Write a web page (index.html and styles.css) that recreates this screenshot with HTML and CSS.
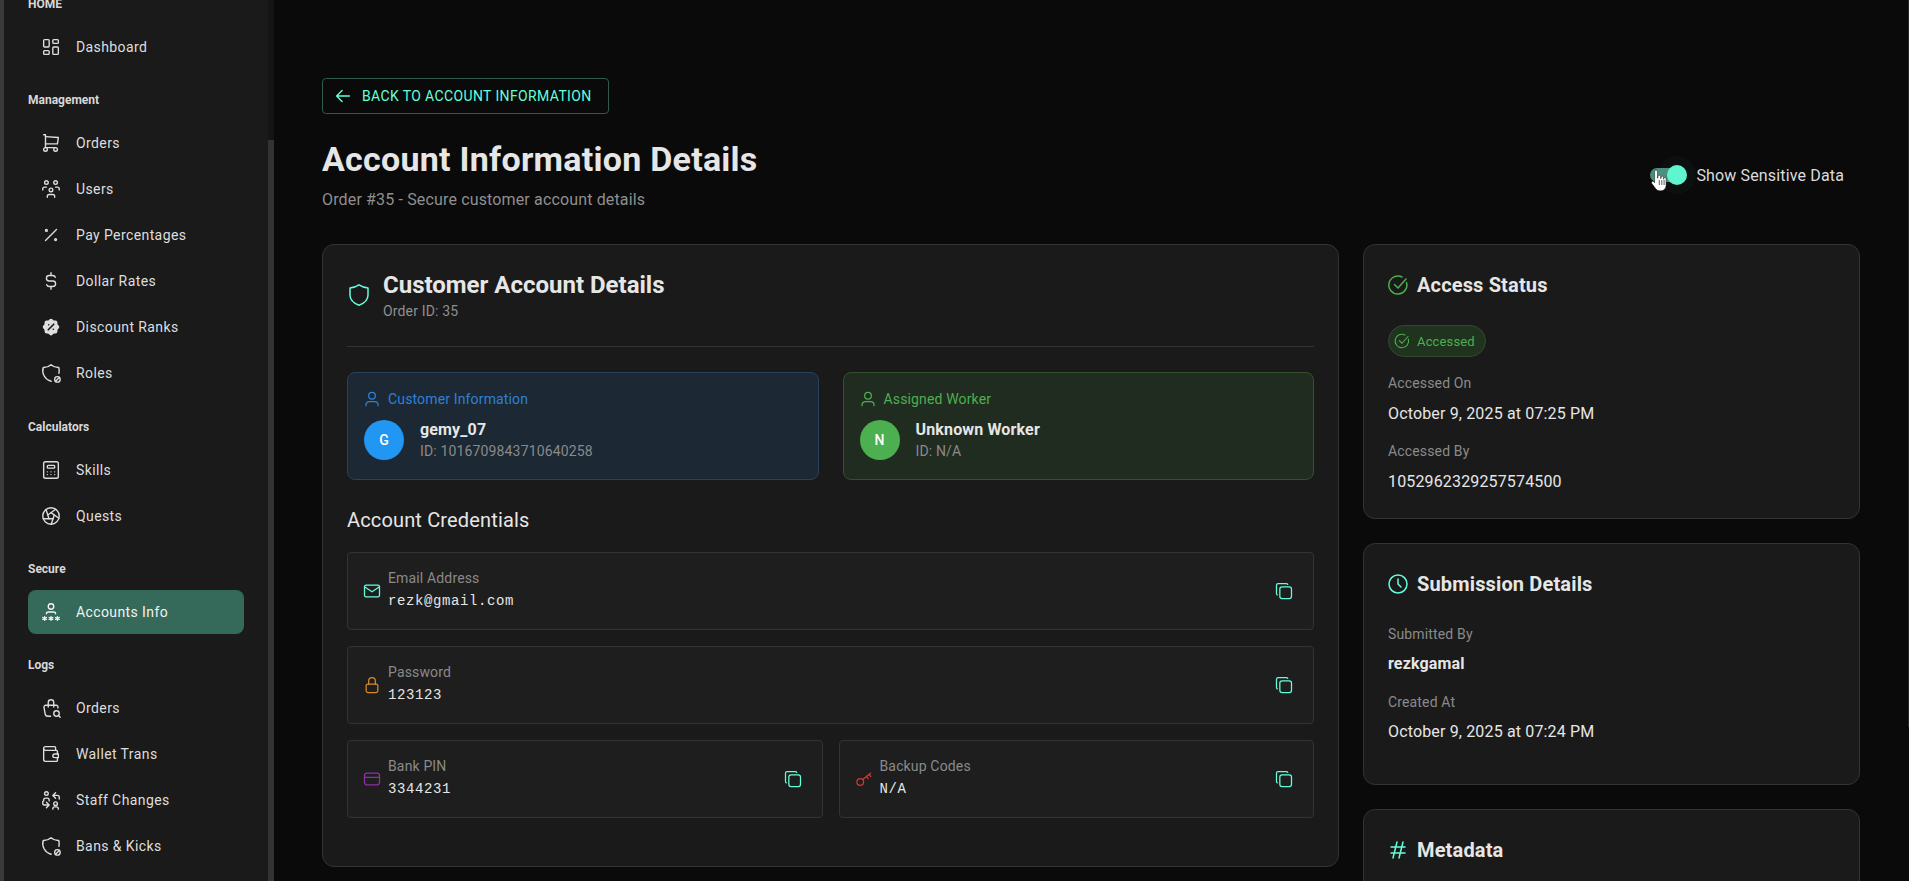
FILE: index.html
```html
<!DOCTYPE html>
<html lang="en">
<head>
<meta charset="utf-8">
<title>Account Information Details</title>
<link rel="stylesheet" href="styles.css">
</head>
<body>
<svg class="defs" width="0" height="0" aria-hidden="true">
  <defs>
    <symbol id="i-dashboard" viewBox="0 0 24 24"><path d="M5 4h4a1 1 0 0 1 1 1v6a1 1 0 0 1 -1 1h-4a1 1 0 0 1 -1 -1v-6a1 1 0 0 1 1 -1"/><path d="M5 16h4a1 1 0 0 1 1 1v2a1 1 0 0 1 -1 1h-4a1 1 0 0 1 -1 -1v-2a1 1 0 0 1 1 -1"/><path d="M15 12h4a1 1 0 0 1 1 1v6a1 1 0 0 1 -1 1h-4a1 1 0 0 1 -1 -1v-6a1 1 0 0 1 1 -1"/><path d="M15 4h4a1 1 0 0 1 1 1v2a1 1 0 0 1 -1 1h-4a1 1 0 0 1 -1 -1v-2a1 1 0 0 1 1 -1"/></symbol>
    <symbol id="i-cart" viewBox="0 0 24 24"><path d="M4 19a2 2 0 1 0 4 0a2 2 0 1 0 -4 0"/><path d="M15 19a2 2 0 1 0 4 0a2 2 0 1 0 -4 0"/><path d="M17 17h-11v-14h-2"/><path d="M6 5l14 1l-1 7h-13"/></symbol>
    <symbol id="i-users" viewBox="0 0 24 24"><path d="M10 13a2 2 0 1 0 4 0a2 2 0 0 0 -4 0"/><path d="M8 21v-1a2 2 0 0 1 2 -2h4a2 2 0 0 1 2 2v1"/><path d="M15 5a2 2 0 1 0 4 0a2 2 0 0 0 -4 0"/><path d="M17 10h2a2 2 0 0 1 2 2v1"/><path d="M5 5a2 2 0 1 0 4 0a2 2 0 0 0 -4 0"/><path d="M3 13v-1a2 2 0 0 1 2 -2h2"/></symbol>
    <symbol id="i-percent" viewBox="0 0 24 24"><path d="M16 17a1 1 0 1 0 2 0a1 1 0 1 0 -2 0"/><path d="M6 7a1 1 0 1 0 2 0a1 1 0 1 0 -2 0"/><path d="M6 18l12 -12"/></symbol>
    <symbol id="i-dollar" viewBox="0 0 24 24"><path d="M16.7 8a3 3 0 0 0 -2.7 -2h-4a3 3 0 0 0 0 6h4a3 3 0 0 1 0 6h-4a3 3 0 0 1 -2.7 -2"/><path d="M12 3v3m0 12v3"/></symbol>
    <symbol id="i-discount" viewBox="0 0 24 24"><path class="solid" d="M5 7.2a2.2 2.2 0 0 1 2.2 -2.2h1a2.2 2.2 0 0 0 1.55 -.64l.7 -.7a2.2 2.2 0 0 1 3.12 0l.7 .7c.412 .41 .97 .64 1.55 .64h1a2.2 2.2 0 0 1 2.2 2.2v1c0 .58 .23 1.138 .64 1.55l.7 .7a2.2 2.2 0 0 1 0 3.12l-.7 .7a2.2 2.2 0 0 0 -.64 1.55v1a2.2 2.2 0 0 1 -2.2 2.2h-1a2.2 2.2 0 0 0 -1.55 .64l-.7 .7a2.2 2.2 0 0 1 -3.12 0l-.7 -.7a2.2 2.2 0 0 0 -1.55 -.64h-1a2.2 2.2 0 0 1 -2.2 -2.2v-1a2.2 2.2 0 0 0 -.64 -1.55l-.7 -.7a2.2 2.2 0 0 1 0 -3.12l.7 -.7a2.2 2.2 0 0 0 .64 -1.55v-1"/><path class="cut" d="M9 15l6 -6M9.5 9.5h.01M14.5 14.5h.01"/></symbol>
    <symbol id="i-shield-x" viewBox="0 0 24 24"><path d="M12.277 20.925c-.092 .026 -.184 .051 -.277 .075a12 12 0 0 1 -8.5 -15a12 12 0 0 0 8.5 -3a12 12 0 0 0 8.5 3a12 12 0 0 1 .145 6.232"/><path d="M16 19a3 3 0 1 0 6 0a3 3 0 1 0 -6 0"/><path d="M17 21l4 -4"/></symbol>
    <symbol id="i-calc" viewBox="0 0 24 24"><path d="M4 5a2 2 0 0 1 2 -2h12a2 2 0 0 1 2 2v14a2 2 0 0 1 -2 2h-12a2 2 0 0 1 -2 -2z"/><path d="M8 8a1 1 0 0 1 1 -1h6a1 1 0 0 1 1 1v1a1 1 0 0 1 -1 1h-6a1 1 0 0 1 -1 -1z"/><path d="M8 14v.01M12 14v.01M16 14v.01M8 17v.01M12 17v.01M16 17v.01"/></symbol>
    <symbol id="i-aperture" viewBox="0 0 24 24"><path d="M3 12a9 9 0 1 0 18 0a9 9 0 1 0 -18 0"/><path d="M3.6 15h10.55"/><path d="M6.551 4.938l3.26 10.034"/><path d="M17.032 4.636l-8.535 6.201"/><path d="M20.559 14.51l-8.535 -6.201"/><path d="M12.257 20.916l3.261 -10.034"/></symbol>
    <symbol id="i-password-user" viewBox="0 0 24 24"><path d="M12 17v4M10 20l4 -2M10 18l4 2M5 17v4M3 20l4 -2M3 18l4 2M19 17v4M17 20l4 -2M17 18l4 2"/><path d="M9 6a3 3 0 1 0 6 0a3 3 0 0 0 -6 0"/><path d="M7 14a2 2 0 0 1 2 -2h6a2 2 0 0 1 2 2"/></symbol>
    <symbol id="i-bag-search" viewBox="0 0 24 24"><path d="M11.5 21h-2.926a3 3 0 0 1 -2.965 -2.544l-1.255 -7.152a2 2 0 0 1 1.977 -2.304h11.339a2 2 0 0 1 1.977 2.304l-.117 .664"/><path d="M9 11v-5a3 3 0 0 1 6 0v5"/><path d="M15 18a3 3 0 1 0 6 0a3 3 0 1 0 -6 0"/><path d="M20.2 20.2l1.8 1.8"/></symbol>
    <symbol id="i-wallet" viewBox="0 0 24 24"><path d="M17 8v-3a1 1 0 0 0 -1 -1h-10a2 2 0 0 0 0 4h12a1 1 0 0 1 1 1v3m0 4v3a1 1 0 0 1 -1 1h-12a2 2 0 0 1 -2 -2v-12"/><path d="M20 12v4h-4a2 2 0 0 1 0 -4h4"/></symbol>
    <symbol id="i-staff" viewBox="0 0 24 24"><path d="M5 5a2 2 0 1 0 4 0a2 2 0 0 0 -4 0"/><path d="M4 13v-1a2 2 0 0 1 2 -2h2a2 2 0 0 1 2 2v1"/><path d="M15 16a2 2 0 1 0 4 0a2 2 0 0 0 -4 0"/><path d="M14 22v-.5a2 2 0 0 1 2 -2h2a2 2 0 0 1 2 2v.5"/><path d="M21 11v-2a2 2 0 0 0 -2 -2h-5l3 -3M14 7l3 3"/><path d="M3 13.500v2a2 2 0 0 0 2 2h5l-3 -3M10 17.500l-3 3"/></symbol>
    <symbol id="i-back" viewBox="0 0 24 24"><path d="M5 12h14M5 12l6 6M5 12l6 -6"/></symbol>
    <symbol id="i-shield" viewBox="0 0 24 24"><path d="M12 1.800c2.800 1.800 5.800 2.900 9 3.200v7c0 5 -3.800 8.300 -9 10.200c-5.200 -1.900 -9 -5.200 -9 -10.200v-7c3.200 -.3 6.200 -1.400 9 -3.200z"/></symbol>
    <symbol id="i-user" viewBox="0 0 24 24"><path d="M8 8a4 4 0 1 0 8 0a4 4 0 0 0 -8 0"/><path d="M4.800 20v-1a4 4 0 0 1 4 -4h6.400a4 4 0 0 1 4 4v1"/></symbol>
    <symbol id="i-mail" viewBox="0 0 24 24"><path d="M3 7a2 2 0 0 1 2 -2h14a2 2 0 0 1 2 2v10a2 2 0 0 1 -2 2h-14a2 2 0 0 1 -2 -2z"/><path d="M3 7l9 6l9 -6"/></symbol>
    <symbol id="i-lock" viewBox="0 0 24 24"><path d="M5 13a2 2 0 0 1 2 -2h10a2 2 0 0 1 2 2v6a2 2 0 0 1 -2 2h-10a2 2 0 0 1 -2 -2z"/><path d="M8 11v-4a4 4 0 1 1 8 0v4"/></symbol>
    <symbol id="i-card" viewBox="0 0 24 24"><path d="M3 8a3 3 0 0 1 3 -3h12a3 3 0 0 1 3 3v8a3 3 0 0 1 -3 3h-12a3 3 0 0 1 -3 -3z"/><path d="M3 10h18"/></symbol>
    <symbol id="i-key" viewBox="0 0 24 24"><path d="M3.500 15.500a4 4 0 1 0 8 0a4 4 0 1 0 -8 0"/><path d="M10.500 12.500l9.500 -7.500"/><path d="M15 9l2 2.500M18 6.500l2 2.500"/></symbol>
    <symbol id="i-copy" viewBox="0 0 24 24"><path d="M7 9.667a2.667 2.667 0 0 1 2.667 -2.667h8.666a2.667 2.667 0 0 1 2.667 2.667v8.666a2.667 2.667 0 0 1 -2.667 2.667h-8.666a2.667 2.667 0 0 1 -2.667 -2.667z"/><path d="M4.012 16.737a2.005 2.005 0 0 1 -1.012 -1.737v-10c0 -1.100 .9 -2 2 -2h10c.75 0 1.158 .385 1.500 1"/></symbol>
    <symbol id="i-check-tail" viewBox="0 0 24 24"><path d="M20.500 9.500a9 9 0 1 1 -4.500 -5.500"/><path d="M8.500 11.500l3.500 3.500l8 -9"/></symbol>
    <symbol id="i-clock" viewBox="0 0 24 24"><path d="M3 12a9 9 0 1 0 18 0a9 9 0 0 0 -18 0"/><path d="M12 7v5l3 3"/></symbol>
    <symbol id="i-hash" viewBox="0 0 24 24"><path d="M5 9h14M5 15h14M11 4l-4 16M17 4l-4 16"/></symbol>
  </defs>
</svg>

<div class="app">
  <aside class="sidebar">
    <nav class="nav">
      <div class="nav-group">
        <div class="nav-title">HOME</div>
        <a class="nav-item"><svg class="icon nav-icon"><use href="#i-dashboard"/></svg><span>Dashboard</span></a>
      </div>
      <div class="nav-group">
        <div class="nav-title">Management</div>
        <a class="nav-item"><svg class="icon nav-icon"><use href="#i-cart"/></svg><span>Orders</span></a>
        <a class="nav-item"><svg class="icon nav-icon"><use href="#i-users"/></svg><span>Users</span></a>
        <a class="nav-item"><svg class="icon nav-icon"><use href="#i-percent"/></svg><span>Pay Percentages</span></a>
        <a class="nav-item"><svg class="icon nav-icon"><use href="#i-dollar"/></svg><span>Dollar Rates</span></a>
        <a class="nav-item"><svg class="icon nav-icon"><use href="#i-discount"/></svg><span>Discount Ranks</span></a>
        <a class="nav-item"><svg class="icon nav-icon"><use href="#i-shield-x"/></svg><span>Roles</span></a>
      </div>
      <div class="nav-group">
        <div class="nav-title">Calculators</div>
        <a class="nav-item"><svg class="icon nav-icon"><use href="#i-calc"/></svg><span>Skills</span></a>
        <a class="nav-item"><svg class="icon nav-icon"><use href="#i-aperture"/></svg><span>Quests</span></a>
      </div>
      <div class="nav-group">
        <div class="nav-title">Secure</div>
        <a class="nav-item is-active"><svg class="icon nav-icon"><use href="#i-password-user"/></svg><span>Accounts Info</span></a>
      </div>
      <div class="nav-group">
        <div class="nav-title">Logs</div>
        <a class="nav-item"><svg class="icon nav-icon"><use href="#i-bag-search"/></svg><span>Orders</span></a>
        <a class="nav-item"><svg class="icon nav-icon"><use href="#i-wallet"/></svg><span>Wallet Trans</span></a>
        <a class="nav-item"><svg class="icon nav-icon"><use href="#i-staff"/></svg><span>Staff Changes</span></a>
        <a class="nav-item"><svg class="icon nav-icon"><use href="#i-shield-x"/></svg><span>Bans &amp; Kicks</span></a>
      </div>
    </nav>
    <div class="side-scroll"><div class="side-thumb"></div></div>
  </aside>

  <main class="main">
    <a class="back-btn"><svg class="icon back-icon"><use href="#i-back"/></svg>BACK TO ACCOUNT INFORMATION</a>

    <header class="page-head">
      <div>
        <h1 class="page-title">Account Information Details</h1>
        <p class="page-sub">Order #35 - Secure customer account details</p>
      </div>
      <label class="toggle">
        <span class="switch"><span class="switch-track"></span><span class="switch-thumb"></span>
          <svg class="hand" viewBox="0 0 16 23"><path d="M5 1.200c.9 0 1.500.7 1.500 1.600v6.200l.5.100V7.500c0-.8.600-1.300 1.300-1.300s1.300.5 1.300 1.300v2l.5.100V8.400c0-.7.600-1.200 1.200-1.200s1.200.5 1.200 1.200v1.700l.4.100V9.500c0-.6.500-1.100 1.100-1.100s1.100.5 1.100 1.100v6.300c0 3.500-2 6-5.200 6H8.700c-2 0-3.200-.9-4.300-2.500L.9 14.600c-.5-.7-.4-1.500.2-2 .6-.4 1.400-.3 1.900.3l.6.800V2.800c0-.9.500-1.600 1.400-1.600z"/><path class="hand-line" d="M8.300 11v5M10.800 11v5M13.100 11v5"/></svg>
        </span>
        <span class="toggle-text">Show Sensitive Data</span>
      </label>
    </header>

    <div class="columns">
      <section class="card card-main">
        <div class="card-head">
          <svg class="icon head-icon teal"><use href="#i-shield"/></svg>
          <div>
            <h2 class="card-title">Customer Account Details</h2>
            <p class="card-sub">Order ID: 35</p>
          </div>
        </div>
        <hr class="divider">
        <div class="people">
          <div class="person person-blue">
            <div class="person-label"><svg class="icon small-icon"><use href="#i-user"/></svg><span>Customer Information</span></div>
            <div class="person-row">
              <div class="avatar">G</div>
              <div>
                <div class="person-name">gemy_07</div>
                <div class="person-id">ID: 1016709843710640258</div>
              </div>
            </div>
          </div>
          <div class="person person-green">
            <div class="person-label"><svg class="icon small-icon"><use href="#i-user"/></svg><span>Assigned Worker</span></div>
            <div class="person-row">
              <div class="avatar">N</div>
              <div>
                <div class="person-name">Unknown Worker</div>
                <div class="person-id">ID: N/A</div>
              </div>
            </div>
          </div>
        </div>

        <h3 class="cred-title">Account Credentials</h3>
        <div class="creds">
          <div class="cred cred-wide">
            <svg class="icon small-icon teal"><use href="#i-mail"/></svg>
            <div class="cred-body"><div class="cred-label">Email Address</div><div class="cred-value">rezk@gmail.com</div></div>
            <span class="copy-btn"><svg class="icon copy-icon"><use href="#i-copy"/></svg></span>
          </div>
          <div class="cred cred-wide">
            <svg class="icon small-icon orange"><use href="#i-lock"/></svg>
            <div class="cred-body"><div class="cred-label">Password</div><div class="cred-value">123123</div></div>
            <span class="copy-btn"><svg class="icon copy-icon"><use href="#i-copy"/></svg></span>
          </div>
          <div class="cred">
            <svg class="icon small-icon purple"><use href="#i-card"/></svg>
            <div class="cred-body"><div class="cred-label">Bank PIN</div><div class="cred-value">3344231</div></div>
            <span class="copy-btn"><svg class="icon copy-icon"><use href="#i-copy"/></svg></span>
          </div>
          <div class="cred">
            <svg class="icon small-icon red"><use href="#i-key"/></svg>
            <div class="cred-body"><div class="cred-label">Backup Codes</div><div class="cred-value">N/A</div></div>
            <span class="copy-btn"><svg class="icon copy-icon"><use href="#i-copy"/></svg></span>
          </div>
        </div>
      </section>

      <div class="side-cards">
        <section class="card">
          <h2 class="side-title"><svg class="icon title-icon green"><use href="#i-check-tail"/></svg>Access Status</h2>
          <div class="chip"><svg class="icon chip-icon"><use href="#i-check-tail"/></svg>Accessed</div>
          <dl class="facts facts-roomy">
            <dt>Accessed On</dt><dd>October 9, 2025 at 07:25 PM</dd>
            <dt>Accessed By</dt><dd class="last">1052962329257574500</dd>
          </dl>
        </section>
        <section class="card">
          <h2 class="side-title"><svg class="icon title-icon teal"><use href="#i-clock"/></svg>Submission Details</h2>
          <dl class="facts facts-open">
            <dt>Submitted By</dt><dd class="strong">rezkgamal</dd>
            <dt>Created At</dt><dd>October 9, 2025 at 07:24 PM</dd>
          </dl>
        </section>
        <section class="card">
          <h2 class="side-title"><svg class="icon title-icon teal"><use href="#i-hash"/></svg>Metadata</h2>
        </section>
      </div>
    </div>
  </main>
  <div class="page-scroll"></div>
</div>
</body>
</html>
```
FILE: styles.css
```css
* { box-sizing: border-box; }
html, body { height: 100%; }
body {
  margin: 0;
  background: #0a0a0a;
  color: #e6e6e6;
  font-family: Roboto, "Liberation Sans", sans-serif;
  font-size: 14px;
  letter-spacing: .15px;
  overflow: hidden;
}
.defs { position: absolute; }
.icon {
  display: block;
  flex: none;
  fill: none;
  stroke: currentColor;
  stroke-width: 1.5;
  stroke-linecap: round;
  stroke-linejoin: round;
}
.solid { fill: currentColor; stroke: none; }
.cut { stroke: #1a1a1a; stroke-width: 1.8; }
.teal { color: #64ffda; }
.green { color: #4caf50; }
.orange { color: #d68a2c; }
.purple { color: #8e2fa6; }
.red { color: #d03a32; }

.app { display: flex; height: 100vh; overflow: hidden; position: relative; }

/* Sidebar */
.sidebar {
  flex: none;
  width: 274px;
  height: 100%;
  display: flex;
  overflow: hidden;
  background: #1a1a1a;
  border-left: 4px solid #3a3a3a;
}
.nav { flex: 1; padding: 0 24px; margin-top: -7px; }
.nav-group { margin-bottom: 20.3px; }
.nav-title {
  height: 20px;
  padding-top: 1px;
  line-height: 20px;
  font-size: 12px;
  font-weight: 700;
  letter-spacing: 0;
  color: #d8d8d8;
  margin-bottom: 12px;
}
.nav-item {
  display: flex;
  align-items: center;
  gap: 14px;
  height: 44px;
  margin-bottom: 2px;
  padding-left: 12px;
  border-radius: 8px;
  color: #dedede;
  font-size: 14px;
  letter-spacing: .4px;
}
.nav-item.is-active { background: #35695a; color: #f2f2f2; }
.nav-icon { width: 22px; height: 22px; }
.side-scroll { flex: none; width: 6px; height: 100%; padding-top: 140px; background: #141414; }
.side-thumb { height: 100%; background: #333; }

/* Main */
.main { flex: 1; min-width: 0; padding: 78px 49px 0 48px; }
.back-btn {
  display: inline-flex;
  align-items: center;
  gap: 8px;
  height: 36px;
  padding: 0 16px 0 9px;
  border: 1px solid #2e5a50;
  border-radius: 4px;
  color: #64ffda;
  font-size: 14px;
  font-weight: 400;
  letter-spacing: .37px;
}
.back-icon { width: 22px; height: 22px; }
.page-head {
  display: flex;
  align-items: center;
  justify-content: space-between;
  margin: 24px 0 32px;
}
.page-title { margin: 0 0 8px; font-size: 34px; line-height: 42px; font-weight: 700; letter-spacing: .25px; color: #e6e6e6; }
.page-sub { margin: 0; font-size: 16px; line-height: 24px; color: #8f8f8f; }
.toggle { display: flex; align-items: center; gap: 9px; margin-right: 16px; }
.toggle-text { font-size: 16px; color: #dcdcdc; }
.switch { position: relative; width: 37px; height: 20px; display: block; }
.switch-track { position: absolute; left: 0; top: 3px; width: 34px; height: 14px; border-radius: 7px; background: #4a8c7c; }
.switch-thumb { position: absolute; right: 0; top: 0; width: 20px; height: 20px; border-radius: 50%; background: #5ff5d0; box-shadow: 0 0 0 9px rgba(100,255,218,.03); }
.hand { position: absolute; left: 1px; top: 4px; width: 16px; height: 23px; fill: #fff; stroke: #111; stroke-width: .5; }
.hand-line { stroke: #333; stroke-width: .8; fill: none; }

.columns { display: grid; grid-template-columns: 1017fr 497fr; gap: 24px; align-items: start; }
.card {
  background: #1a1a1a;
  border: 1px solid #333;
  border-radius: 12px;
  padding: 24px;
}
.card-main { padding-bottom: 48px; }
.card-head { display: flex; align-items: center; gap: 12px; }
.head-icon { width: 24px; height: 24px; }
.card-title { margin: 0; font-size: 24px; line-height: 32px; font-weight: 700; letter-spacing: 0; color: #e6e6e6; }
.card-sub { margin: 0; font-size: 14px; line-height: 20px; color: #8f8f8f; }
.divider { margin: 25px 0 25px; border: 0; border-top: 1px solid #333; }

.people { display: grid; grid-template-columns: 1fr 1fr; gap: 24px; }
.person { height: 108px; padding: 16px; border: 1px solid; border-radius: 8px; }
.person-blue { background: #1c2833; border-color: #27425c; color: #2f80d6; }
.person-green { background: #212c21; border-color: #35502f; color: #4caf50; }
.person-label { display: flex; align-items: center; gap: 6px; height: 20px; margin: 0 0 10px -2px; font-size: 14px; }
.small-icon { width: 20px; height: 20px; }
.person-row { display: flex; align-items: center; gap: 16px; }
.avatar {
  width: 40px; height: 40px; border-radius: 50%;
  display: flex; align-items: center; justify-content: center;
  color: #fff; font-size: 14px; font-weight: 500;
}
.person-blue .avatar { background: #2196f3; }
.person-green .avatar { background: #4caf50; }
.person-name { font-size: 16px; line-height: 22px; font-weight: 700; color: #e6e6e6; }
.person-id { font-size: 14px; line-height: 20px; color: #8a8a8a; }

.cred-title { margin: 24px 0 16px; font-size: 20px; line-height: 32px; font-weight: 400; color: #e6e6e6; }
.creds { display: grid; grid-template-columns: 1fr 1fr; gap: 16px; }
.cred {
  display: flex;
  align-items: center;
  gap: 6px;
  height: 78px;
  padding: 0 11px 0 14px;
  background: #1e1e1e;
  border: 1px solid #333;
  border-radius: 4px;
}
.cred-wide { grid-column: 1 / -1; }
.cred-body { flex: 1; min-width: 0; }
.cred-label { font-size: 14px; line-height: 18px; margin-bottom: 2px; color: #8a8a8a; }
.cred-value { font-family: "Liberation Mono", monospace; font-size: 14px; line-height: 24px; letter-spacing: .6px; color: #e6e6e6; }
.copy-btn { width: 36px; height: 36px; display: flex; align-items: center; justify-content: center; color: #64ffda; }
.copy-icon { width: 20px; height: 20px; }

.side-cards { display: flex; flex-direction: column; gap: 24px; }
.side-title { display: flex; align-items: center; gap: 7px; margin: 0 0 24px; font-size: 20px; line-height: 32px; font-weight: 700; color: #e6e6e6; }
.title-icon { width: 24px; height: 24px; margin-left: -2px; }
.chip {
  display: inline-flex; align-items: center; gap: 6px;
  height: 32px; padding: 0 10px 0 4px;
  background: #20331f; border: 1px solid #2f4a2d; border-radius: 16px;
  color: #4caf50; font-size: 13px;
}
.chip-icon { width: 18px; height: 18px; }
.facts { margin: 16px 0 0; }
.facts-open { margin: 0; }
.facts dt { font-size: 14px; line-height: 20px; color: #8a8a8a; margin-bottom: 8px; }
.facts dd { margin: 0 0 16px; font-size: 16px; line-height: 24px; color: #e6e6e6; }
.facts-roomy dt { margin-bottom: 9px; }
.facts-roomy dd { margin-bottom: 15px; }
.facts dd.last { margin-bottom: 0; }
.facts dd.strong { font-weight: 700; }

.page-scroll { position: absolute; right: 0; top: 0; width: 1px; height: 727px; background: #2a2a2a; }
```
